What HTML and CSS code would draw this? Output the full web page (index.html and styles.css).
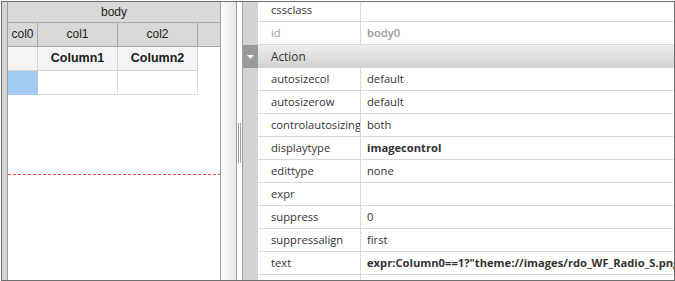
FILE: index.html
```html
<!DOCTYPE html>
<html lang="en">
<head>
    <meta charset="UTF-8">
    <title>Grid Designer</title>
    <link rel="stylesheet" href="styles.css">
</head>
<body>
    <div class="designer">
        <div class="rail"></div>

        <div class="canvas">
            <div class="band">body</div>
            <div class="grid-row head">
                <div class="cell c0">col0</div>
                <div class="cell c1">col1</div>
                <div class="cell c2">col2</div>
                <div class="cell rest"></div>
            </div>
            <div class="grid-row caption">
                <div class="cell c0"></div>
                <div class="cell c1">Column1</div>
                <div class="cell c2">Column2</div>
            </div>
            <div class="grid-row data">
                <div class="cell c0 selected"></div>
                <div class="cell c1"></div>
                <div class="cell c2"></div>
            </div>
            <div class="band-limit"></div>
        </div>

        <div class="vscroll"></div>
        <div class="splitter"><div class="grip"></div></div>

        <div class="props">
            <div class="prop-list">
                <div class="prop"><div class="gutter"></div><div class="pname">cssclass</div><div class="pvalue"></div></div>
                <div class="prop readonly"><div class="gutter"></div><div class="pname">id</div><div class="pvalue">body0</div></div>
                <div class="prop category">
                    <div class="gutter">
                        <svg width="7" height="4" viewBox="0 0 7 4"><polygon points="0,0 7,0 3.5,4" fill="#fff"/></svg>
                    </div>
                    <div class="ptitle">Action</div>
                </div>
                <div class="prop"><div class="gutter"></div><div class="pname">autosizecol</div><div class="pvalue">default</div></div>
                <div class="prop"><div class="gutter"></div><div class="pname">autosizerow</div><div class="pvalue">default</div></div>
                <div class="prop"><div class="gutter"></div><div class="pname">controlautosizing</div><div class="pvalue">both</div></div>
                <div class="prop"><div class="gutter"></div><div class="pname">displaytype</div><div class="pvalue set">imagecontrol</div></div>
                <div class="prop"><div class="gutter"></div><div class="pname">edittype</div><div class="pvalue">none</div></div>
                <div class="prop"><div class="gutter"></div><div class="pname">expr</div><div class="pvalue"></div></div>
                <div class="prop"><div class="gutter"></div><div class="pname">suppress</div><div class="pvalue">0</div></div>
                <div class="prop"><div class="gutter"></div><div class="pname">suppressalign</div><div class="pvalue">first</div></div>
                <div class="prop"><div class="gutter"></div><div class="pname">text</div><div class="pvalue set">expr:Column0==1?"theme://images/rdo_WF_Radio_S.png":"theme://images/rdo_WF_Radio.png"</div></div>
                <div class="prop"><div class="gutter"></div><div class="pname"></div><div class="pvalue"></div></div>
            </div>
        </div>
    </div>
</body>
</html>
```

FILE: styles.css
```css
body {
    margin: 1px 0 0 1px;
    background-color: #fff;
    font-family: "Liberation Sans", Arial, sans-serif;
}
.designer {
    display: flex;
    width: 674px;
    height: 280px;
    box-sizing: border-box;
    border: 1px solid #6e6e6e;
    background-color: #fff;
    overflow: hidden;
}
.rail {
    flex: none;
    width: 6px;
    box-sizing: border-box;
    background-color: #d4d4d4;
    border-right: 1px solid #9c9c9c;
}

/* grid canvas */
.canvas {
    flex: none;
    width: 213px;
    box-sizing: border-box;
    border-right: 1px solid #a0a0a0;
    font-size: 12px;
    color: #222;
}
.band {
    height: 21px;
    line-height: 20px;
    box-sizing: border-box;
    text-align: center;
    background-color: #d9d9d9;
    border-bottom: 1px solid #a8a8a8;
}
.grid-row {
    display: flex;
    height: 24px;
}
.cell {
    flex: none;
    box-sizing: border-box;
    line-height: 23px;
    text-align: center;
}
.c0 {
    width: 30px;
}
.c1, .c2 {
    width: 80px;
}
.rest {
    flex: 1;
}
.head {
    background-color: #d9d9d9;
    border-bottom: 1px solid #a8a8a8;
    box-sizing: border-box;
}
.head .cell {
    border-right: 1px solid #a8a8a8;
}
.head .rest {
    border-right: none;
}
.caption .cell {
    background-color: #f4f4f4;
    border-right: 1px solid #d4d4d4;
    border-bottom: 1px solid #d4d4d4;
    font-weight: bold;
    font-size: 12.5px;
    color: #1a1a1a;
}
.data .cell {
    border-right: 1px solid #dcdcdc;
    border-bottom: 1px solid #dcdcdc;
}
.data .selected {
    background-color: #a4cbf2;
    border-color: #a4cbf2;
}
.band-limit {
    height: 1px;
    margin-top: 79px;
    background: repeating-linear-gradient(to right, #f04a3a 0 3px, transparent 3px 5px);
}

.vscroll {
    flex: none;
    width: 16px;
    box-sizing: border-box;
    border-right: 1px solid #a0a0a0;
    background: linear-gradient(to right, #fcfcfc, #e8e8e8);
}
.splitter {
    flex: none;
    width: 5px;
}
.grip {
    width: 3px;
    height: 40px;
    box-sizing: border-box;
    margin: 121px 0 0 1px;
    border-left: 1px solid #a0a0a0;
    border-right: 1px solid #a0a0a0;
}

/* property grid */
.props {
    flex: 1;
    min-width: 0;
    border-left: 1px solid #a0a0a0;
    overflow: hidden;
    font-family: "Open Sans", "Noto Sans", sans-serif;
    font-size: 11.2px;
    color: #333;
}
.prop-list {
    margin-top: -3px;
}
.prop {
    display: flex;
    height: 23px;
}
.gutter {
    flex: none;
    width: 15px;
    background-color: #d4d4d4;
}
.pname, .pvalue {
    box-sizing: border-box;
    height: 23px;
    line-height: 22px;
    border-bottom: 1px solid #d9d9d9;
    white-space: nowrap;
    overflow: hidden;
}
.pname {
    flex: none;
    width: 103px;
    padding-left: 13px;
    border-right: 1px solid #d9d9d9;
}
.pvalue {
    flex: 1;
    min-width: 0;
    padding-left: 6px;
}
.pvalue.set {
    font-weight: bold;
}
.readonly .pname, .readonly .pvalue {
    color: #9a9a9a;
}
.readonly .pvalue {
    font-weight: 600;
}
.category .gutter {
    display: flex;
    align-items: center;
    justify-content: center;
    background-color: #9a9a9a;
}
.ptitle {
    flex: 1;
    padding-left: 13px;
    line-height: 23px;
    font-size: 11.8px;
    background: linear-gradient(#eeeeee, #d2d2d2);
}
```
